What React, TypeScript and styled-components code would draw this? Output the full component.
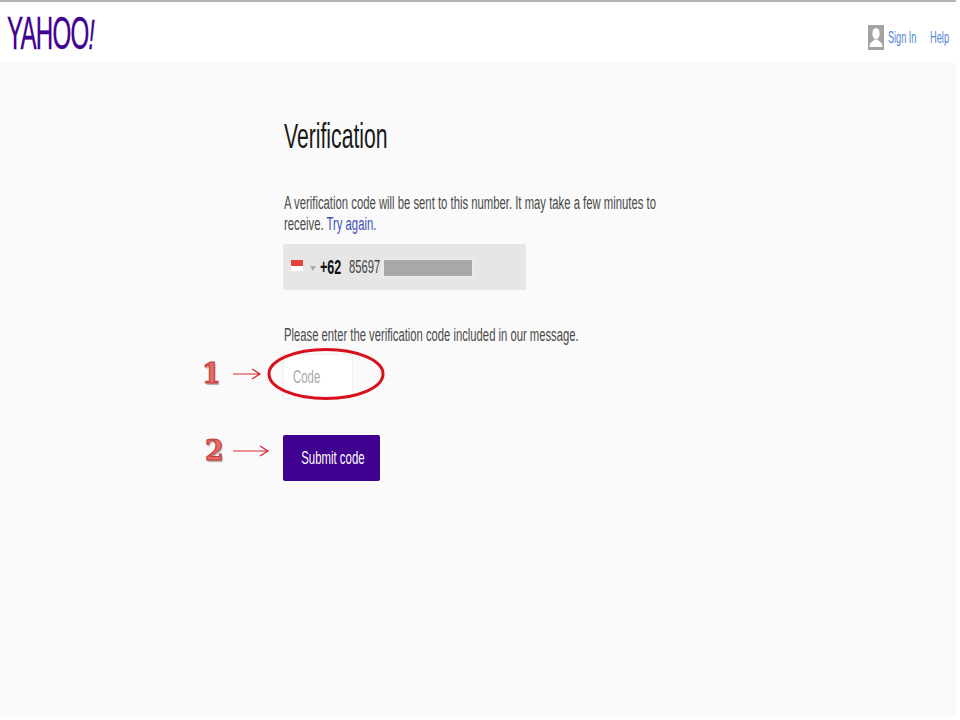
import React from "react";
import styled, { createGlobalStyle } from "styled-components";

const Global = createGlobalStyle`
  html, body { margin: 0; padding: 0; background: #fff; }
  body { font-family: "Liberation Sans", Arial, sans-serif; color: #444; }
`;

const Page = styled.div`
  position: relative;
  width: 956px;
  height: 717px;
  display: flex;
  flex-direction: column;
  background: #fafafa;
  overflow: hidden;
`;

const Header = styled.header`
  height: 60px;
  flex: none;
  display: flex;
  align-items: center;
  justify-content: space-between;
  background: #fff;
  border-top: 2px solid #b4b4b4;
`;

const Squeeze = styled.span<{ $x: number; $origin?: string }>`
  display: block;
  white-space: nowrap;
  transform: scaleX(${(p) => p.$x});
  transform-origin: ${(p) => p.$origin ?? "left"} center;
`;

const Logo = styled.div`
  width: 100px;
  margin: 3px 0 0 7px;
  font-size: 46px;
  line-height: 46px;
  color: #400090;
  letter-spacing: -1.5px;
  -webkit-text-stroke: 0.4px #400090;
  i { font-size: 42px; }
`;

const Nav = styled.nav`
  display: flex;
  align-items: center;
  padding-right: 7px;
  padding-top: 10px;
`;

const Avatar = styled.svg`
  width: 16px;
  height: 25px;
  margin-right: 4px;
`;

const NavLink = styled.a<{ $width: number }>`
  display: block;
  width: ${(p) => p.$width}px;
  padding-top: 1px;
  font-size: 16px;
  line-height: 18px;
  color: #4f86d8;
`;

const Main = styled.main`
  flex: 1;
  padding: 56px 0 0 284px;
  display: flex;
  flex-direction: column;
  align-items: flex-start;
`;

const Title = styled.h1`
  margin: 0;
  height: 36px;
  font-size: 35px;
  line-height: 36px;
  font-weight: 400;
  color: #1a1a1a;
`;

const Text = styled.p<{ $top: number }>`
  margin: ${(p) => p.$top}px 0 0;
  font-size: 18px;
  line-height: 21px;
  color: #4a4a4a;
`;

const Link = styled.a`
  color: #3f51b5;
`;

const PhoneBox = styled.div`
  margin: 9px 0 0 -1px;
  width: 243px;
  height: 46px;
  box-sizing: border-box;
  padding-left: 8px;
  display: flex;
  align-items: center;
  background: #e6e6e7;
  border-radius: 2px;
`;

const Flag = styled.div`
  width: 12px;
  height: 11px;
  margin-top: -3px;
  background: linear-gradient(#e8413c 0 55%, #fff 55% 100%);
`;

const Caret = styled.div`
  width: 0;
  height: 0;
  margin: 2px 0 0 7px;
  border-left: 3.5px solid transparent;
  border-right: 3.5px solid transparent;
  border-top: 5px solid #aaa;
`;

const Dial = styled.div`
  width: 29px;
  margin-left: 4px;
  font-size: 20px;
  font-weight: 700;
  color: #111;
`;

const PhoneNumber = styled.div`
  width: 35px;
  font-size: 19px;
  color: #444;
`;

const Redaction = styled.div`
  width: 88px;
  height: 16px;
  margin-top: 2px;
  background: #a8a8a8;
  box-shadow: 0 0 2px 1px #eee;
`;

const CodeField = styled.div`
  margin: 8px 0 0 -1px;
  width: 70px;
  height: 45px;
  box-sizing: border-box;
  padding: 1px 0 0 9px;
  display: flex;
  align-items: center;
  background: #fff;
  border: 1px solid #f0f0f0;
  font-size: 19px;
  color: #a8a8a8;
`;

const Submit = styled.button`
  margin: 36px 0 0 -1px;
  width: 97px;
  height: 46px;
  padding: 0 6px 0 0;
  border: 0;
  border-radius: 2px;
  background: #400090;
  color: #fff;
  font-family: inherit;
  font-size: 19px;
`;

const Annotations = styled.svg`
  position: absolute;
  left: 0;
  top: 0;
  pointer-events: none;
`;

const Step = styled.div<{ $left: number; $top: number }>`
  position: absolute;
  left: ${(p) => p.$left}px;
  top: ${(p) => p.$top}px;
  font-family: "DejaVu Serif", serif;
  font-weight: 700;
  font-size: 27px;
  line-height: 28px;
  color: #e56a68;
  -webkit-text-stroke: 1px #c23b3b;
  text-shadow: 1px 2px 1px #b9a7a7;
`;

export default function App() {
  return (
    <Page>
      <Global />
      <Header>
        <Logo>
          <Squeeze $x={0.525}>
            YAHOO<i>!</i>
          </Squeeze>
        </Logo>
        <Nav>
          <Avatar viewBox="0 0 16 25">
            <rect width="16" height="25" fill="#a3a3a3" />
            <ellipse cx="8" cy="8.5" rx="3.6" ry="5.5" fill="#fff" />
            <path d="M1.5 22 C1.5 17 5 16.5 6.5 14.5 H9.5 C11 16.5 14.5 17 14.5 22 Z" fill="#fff" />
          </Avatar>
          <NavLink $width={42}>
            <Squeeze $x={0.57}>Sign In</Squeeze>
          </NavLink>
          <NavLink $width={19}>
            <Squeeze $x={0.58}>Help</Squeeze>
          </NavLink>
        </Nav>
      </Header>
      <Main>
        <Title>
          <Squeeze $x={0.605}>Verification</Squeeze>
        </Title>
        <Text $top={39}>
          <Squeeze $x={0.628}>
            A verification code will be sent to this number. It may take a few minutes to
          </Squeeze>
          <Squeeze $x={0.628}>
            receive. <Link>Try again.</Link>
          </Squeeze>
        </Text>
        <PhoneBox>
          <Flag />
          <Caret />
          <Dial>
            <Squeeze $x={0.63}>+62</Squeeze>
          </Dial>
          <PhoneNumber>
            <Squeeze $x={0.59}>85697</Squeeze>
          </PhoneNumber>
          <Redaction />
        </PhoneBox>
        <Text $top={35}>
          <Squeeze $x={0.625}>Please enter the verification code included in our message.</Squeeze>
        </Text>
        <CodeField>
          <Squeeze $x={0.6}>Code</Squeeze>
        </CodeField>
        <Submit>
          <Squeeze $x={0.6} $origin="center">
            Submit code
          </Squeeze>
        </Submit>
      </Main>
      <Annotations width="956" height="717" viewBox="0 0 956 717" fill="none">
        <ellipse cx="326" cy="374" rx="57" ry="24.5" stroke="#d8101c" strokeWidth="3" />
        <path d="M233 374 H260 M252 369 L260 374 L252 379" stroke="#d9242c" strokeWidth="1.2" />
        <path d="M233 451 H268 M260 446 L268 451 L260 456" stroke="#d9242c" strokeWidth="1.2" />
      </Annotations>
      <Step $left={202} $top={360}>1</Step>
      <Step $left={205} $top={437}>2</Step>
    </Page>
  );
}
